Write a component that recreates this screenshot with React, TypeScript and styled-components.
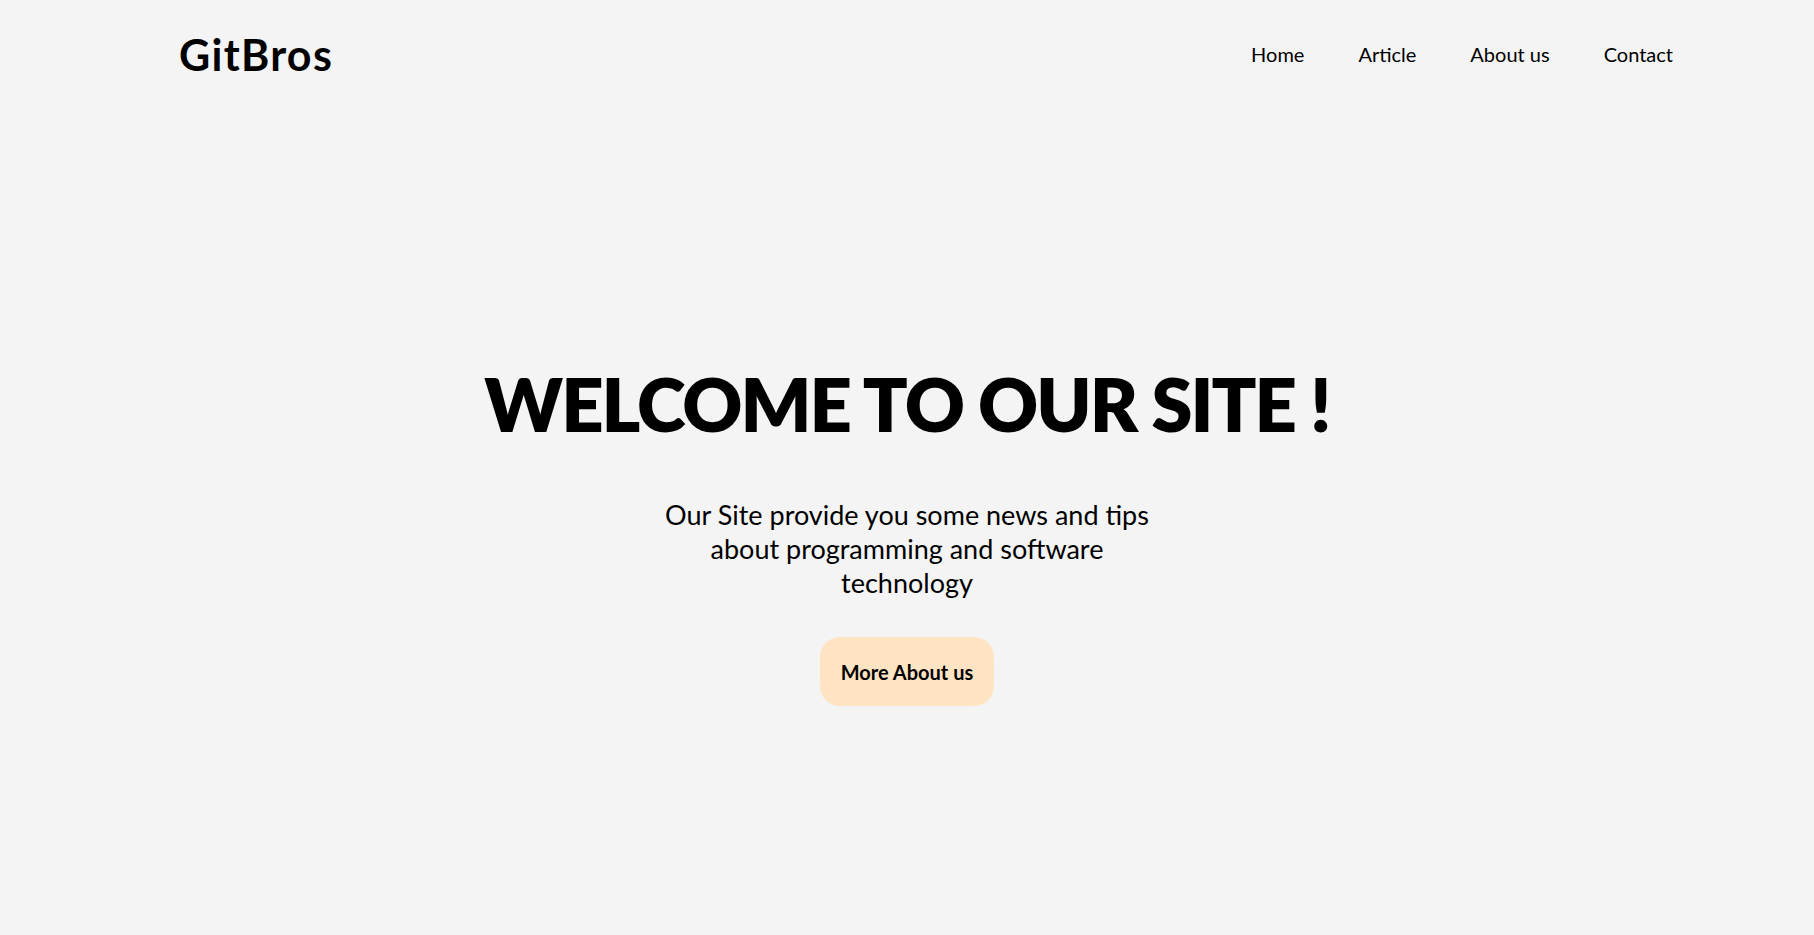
import React from "react";
import styled, { createGlobalStyle } from "styled-components";

const Global = createGlobalStyle`
  html, body { margin: 0; padding: 0; }
  body {
    background: #f4f4f4;
    color: #000;
    font-family: "Lato", "Inter", "Liberation Sans", sans-serif;
  }
  * { box-sizing: border-box; }
`;

const Page = styled.div`
  min-height: 935px;
  display: flex;
  flex-direction: column;
`;

const Header = styled.header`
  height: 108px;
  display: flex;
  align-items: center;
  justify-content: space-between;
  padding: 0 141px 0 179px;
`;

const Logo = styled.div`
  font-size: 43px;
  font-weight: 700;
  letter-spacing: 1.3px;
`;

const Nav = styled.nav`
  display: flex;
  gap: 54px;
`;

const NavLink = styled.a`
  font-size: 20px;
  font-weight: 400;
  color: #000;
  text-decoration: none;
`;

const Hero = styled.main`
  display: flex;
  flex-direction: column;
  align-items: center;
  padding-top: 259px;
`;

const Title = styled.h1`
  margin: 0;
  font-size: 74px;
  font-weight: 800;
  line-height: 1;
  letter-spacing: -2px;
`;

const Lead = styled.p`
  margin: 57px 0 0;
  width: 500px;
  text-align: center;
  font-size: 27px;
  line-height: 34px;
  font-weight: 400;
`;

const Button = styled.button`
  margin-top: 37px;
  width: 174px;
  height: 69px;
  border: none;
  border-radius: 20px;
  background: #ffe4c4;
  color: #000;
  font-family: inherit;
  font-size: 20px;
  font-weight: 700;
  cursor: pointer;
`;

export default function App() {
  return (
    <Page>
      <Global />
      <Header>
        <Logo>GitBros</Logo>
        <Nav>
          <NavLink href="#">Home</NavLink>
          <NavLink href="#">Article</NavLink>
          <NavLink href="#">About us</NavLink>
          <NavLink href="#">Contact</NavLink>
        </Nav>
      </Header>
      <Hero>
        <Title>WELCOME TO OUR SITE !</Title>
        <Lead>Our Site provide you some news and tips about programming and software technology</Lead>
        <Button>More About us</Button>
      </Hero>
    </Page>
  );
}
